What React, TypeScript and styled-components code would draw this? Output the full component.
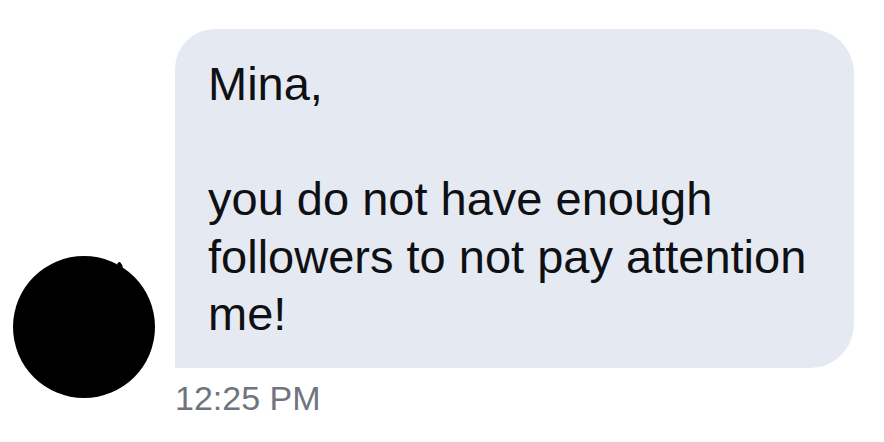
import React from 'react';
import styled, { createGlobalStyle } from 'styled-components';

// ----------
// Style
// ----------

const GlobalStyle = createGlobalStyle`
  html, body {
    margin: 0;
    padding: 0;
    background: #ffffff;
  }

  body {
    font-family: 'Liberation Sans', Arial, sans-serif;
    -webkit-font-smoothing: antialiased;
  }
`;

const Screen = styled.div`
  width: 884px;
  height: 442px;
  overflow: hidden;
  background: #ffffff;
`;

const MessageRow = styled.div`
  display: flex;
  flex-direction: row;
  align-items: flex-end;
  gap: 20px;
  padding-left: 13px;
`;

const Avatar = styled.div`
  position: relative;
  flex: 0 0 auto;
  width: 142px;
  height: 142px;
  margin-bottom: 20px;
  border-radius: 50%;
  background: #000000;

  /* tiny nub on the rim, like the original photo crop */
  &::after {
    content: '';
    position: absolute;
    top: 6px;
    left: 105px;
    width: 4px;
    height: 7px;
    border-radius: 2px;
    background: #000000;
    transform: rotate(-30deg);
  }
`;

const MessageColumn = styled.div`
  display: flex;
  flex-direction: column;
  align-items: flex-start;
  padding-top: 29px;
`;

const Bubble = styled.div`
  box-sizing: border-box;
  width: 679px;
  padding: 26px 33px 25px 33px;
  border-radius: 40px 44px 44px 0;
  background: #e5e9f1;
  color: #0f1014;
  font-size: 47px;
  line-height: 57.5px;
  white-space: pre-wrap;
`;

const Timestamp = styled.div`
  margin-top: 10px;
  color: #6f757f;
  font-size: 34px;
  line-height: 40px;
`;

// ----------

const message = 'Mina,\n\nyou do not have enough followers to not pay attention me!';

const App: React.FC = () => (
  <Screen>
    <GlobalStyle />
    <MessageRow>
      <Avatar />
      <MessageColumn>
        <Bubble>{message}</Bubble>
        <Timestamp>12:25 PM</Timestamp>
      </MessageColumn>
    </MessageRow>
  </Screen>
);

export default App;
